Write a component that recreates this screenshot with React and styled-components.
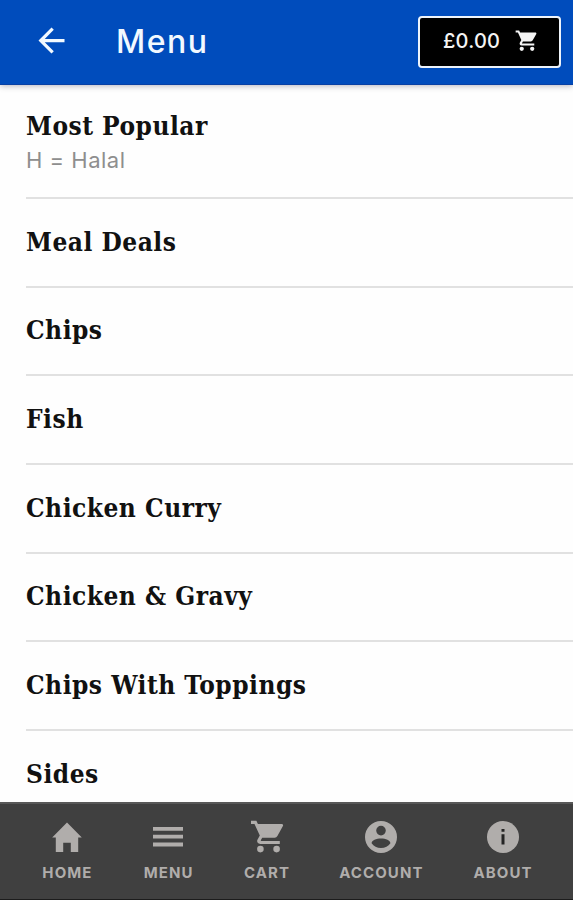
import React, { useState } from 'react';
import styled, { createGlobalStyle } from 'styled-components';
import { MdArrowBack } from 'react-icons/md';

const CATEGORIES = [
  { id: 1, name: 'Most Popular', note: 'H = Halal' },
  { id: 2, name: 'Meal Deals' },
  { id: 3, name: 'Chips' },
  { id: 4, name: 'Fish' },
  { id: 5, name: 'Chicken Curry' },
  { id: 6, name: 'Chicken & Gravy' },
  { id: 7, name: 'Chips With Toppings' },
  { id: 8, name: 'Sides' },
];

const HomeIcon = () => (
  <Glyph viewBox="0 0 34 34">
    <path d="M17 2.6 L31.8 17.4 H28.2 V32 H20.8 V22.8 H13.2 V32 H5.8 V17.4 H2.2 Z" />
  </Glyph>
);

const MenuIcon = () => (
  <Glyph viewBox="0 0 34 34">
    <path d="M2 7h30v3.8H2zM2 14.8h30v3.8H2zM2 22.600h30v3.8H2z" />
  </Glyph>
);

const CartIcon = ({ size }) => (
  <Glyph viewBox="0 0 34 34" $size={size}>
    <path
      fillRule="evenodd"
      d="M1 .8h5.4l1.500 3.100H32q1.600.4.9 2.100l-5.500 10q-.9 1.700-2.700 1.700H12.200l-1.400 2.600q-.2.700.6.700h18.400v2.900H10.200c-2.600 0-3.800-2.400-2.600-4.500l2.200-3.900L4.500 3.900H1z"
    />
    <circle cx="10.400" cy="29.100" r="3.300" />
    <circle cx="26.600" cy="29.100" r="3.300" />
  </Glyph>
);

const AccountIcon = () => (
  <Glyph viewBox="0 0 34 34">
    <path
      fillRule="evenodd"
      d="M17 1a16 16 0 1 0 0 32 16 16 0 0 0 0-32zm0 4.8a4.8 4.8 0 1 1 0 9.6 4.8 4.8 0 0 1 0-9.6zM7.6 23.3c0-3 4.7-4.9 9.4-4.9s9.4 1.9 9.4 4.9c-2 3-5.4 4.7-9.4 4.7s-7.4-1.7-9.4-4.7z"
    />
  </Glyph>
);

const InfoIcon = () => (
  <Glyph viewBox="0 0 34 34">
    <circle cx="17" cy="17" r="16" />
    <path d="M15.5 9h3v2.800h-3zM15.5 14.200h3v10.400h-3z" fill="#242424" />
  </Glyph>
);

const TABS = [
  { id: 'home', label: 'Home', icon: HomeIcon, width: 51 },
  { id: 'menu', label: 'Menu', icon: MenuIcon, width: 51 },
  { id: 'cart', label: 'Cart', icon: CartIcon, width: 45 },
  { id: 'account', label: 'Account', icon: AccountIcon, width: 83 },
  { id: 'about', label: 'About', icon: InfoIcon, width: 60 },
];

export default function App() {
  const [total] = useState(0);

  return (
    <Screen>
      <GlobalStyle />
      <Header>
        <BackButton aria-label="Back">
          <MdArrowBack size={39} />
        </BackButton>
        <Title>Menu</Title>
        <CartButton>
          <Total>£{total.toFixed(2)}</Total>
          <CartIcon size={22} />
        </CartButton>
      </Header>

      <CategoryList>
        {CATEGORIES.map(category => (
          <Category key={category.id} $tall={Boolean(category.note)}>
            <CategoryName>{category.name}</CategoryName>
            {category.note && <CategoryNote>{category.note}</CategoryNote>}
          </Category>
        ))}
      </CategoryList>

      <TabBar>
        {TABS.map(({ id, label, icon: Icon, width }) => (
          <Tab key={id} $width={width}>
            <Icon />
            <TabLabel>{label}</TabLabel>
          </Tab>
        ))}
      </TabBar>
    </Screen>
  );
}

const GlobalStyle = createGlobalStyle`
  * { box-sizing: border-box; }

  body {
    margin: 0;
    background: #fefefe;
    font-family: Inter, 'Open Sans', sans-serif;
  }

  button {
    border: none;
    background: none;
    padding: 0;
    font: inherit;
    cursor: pointer;
  }
`;

const Screen = styled.div`
  display: flex;
  flex-direction: column;
  width: 100%;
  height: 900px;
  overflow: hidden;
`;

const Header = styled.header`
  display: flex;
  align-items: center;
  flex-shrink: 0;
  height: 85px;
  padding: 0 12px 1px 32px;
  color: #fff;
  background: #004cbc;
  border-bottom: 1px solid #0840a4;
  box-shadow: 0 1px 6px rgba(0, 0, 40, 0.3);
  z-index: 1;
`;

const BackButton = styled.button`
  display: flex;
  color: #f2f9ff;
  margin-top: -2px;
`;

const Title = styled.h1`
  flex: 1;
  margin: 0 0 0 45px;
  font-size: 32px;
  font-weight: 500;
  letter-spacing: 1.5px;
  color: #f2f9ff;
`;

const CartButton = styled.button`
  display: flex;
  align-items: center;
  justify-content: space-between;
  width: 143px;
  height: 52px;
  padding: 0 22px 1px 23px;
  color: #f4f4f4;
  background: #000;
  border: 2px solid #eef4fb;
  border-radius: 4px;
`;

const Total = styled.span`
  font-size: 20px;
  font-weight: 500;
  letter-spacing: 0.2px;
`;

const CategoryList = styled.ul`
  flex: 1;
  min-height: 0;
  margin: 0;
  padding: 0 0 0 26px;
  overflow: hidden;
  list-style: none;
`;

const Category = styled.li`
  display: flex;
  flex-direction: column;
  justify-content: ${({ $tall }) => ($tall ? 'flex-start' : 'center')};
  height: ${({ $tall }) => ($tall ? '114px' : '88.7px')};
  padding-top: ${({ $tall }) => ($tall ? '24px' : '0')};
  padding-bottom: ${({ $tall }) => ($tall ? '0' : '1.5px')};
  border-bottom: 2px solid #e1e1e1;
`;

const CategoryName = styled.h2`
  margin: 0;
  font-family: 'DejaVu Serif Condensed', 'DejaVu Serif', serif;
  font-stretch: condensed;
  font-size: 26px;
  font-weight: 700;
  line-height: 34px;
  letter-spacing: 0.5px;
  color: #111;
`;

const CategoryNote = styled.p`
  margin: 0;
  font-size: 22px;
  line-height: 34px;
  letter-spacing: 0.5px;
  color: #8e8e8e;
`;

const TabBar = styled.nav`
  display: flex;
  justify-content: center;
  gap: 50.3px;
  flex-shrink: 0;
  height: 98px;
  padding: 16px 0 0 1px;
  background: #404040;
  border-top: 2px solid #585858;
  border-bottom: 1px solid #1c1c1c;
`;

const Tab = styled.button`
  display: flex;
  flex-direction: column;
  align-items: center;
  width: ${({ $width }) => $width}px;
  color: #b0adab;
`;

const Glyph = styled.svg`
  display: block;
  flex-shrink: 0;
  width: ${({ $size = 34 }) => $size}px;
  height: ${({ $size = 34 }) => $size}px;
  fill: currentColor;
`;

const TabLabel = styled.span`
  margin: 9px -1.1px 0 0;
  font-size: 15px;
  font-weight: 700;
  line-height: 20px;
  letter-spacing: 1.1px;
  text-transform: uppercase;
  white-space: nowrap;
`;
